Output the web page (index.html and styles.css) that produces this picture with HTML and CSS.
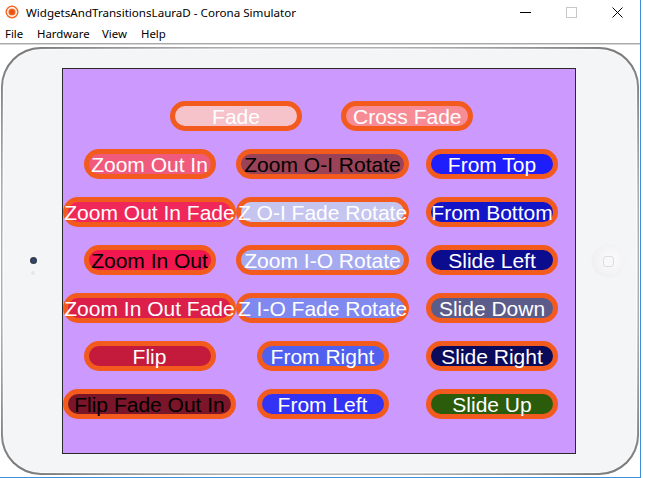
FILE: index.html
```html
<!DOCTYPE html>
<html>
<head>
<meta charset="utf-8">
<link rel="stylesheet" href="styles.css">
</head>
<body>
<div class="window">
  <div class="titlebar">
    <svg class="appicon" width="14" height="14" viewBox="0 0 14 14">
      <circle cx="7" cy="7" r="6.5" fill="#f26a21"/>
      <circle cx="7" cy="7" r="4.3" fill="none" stroke="#fff" stroke-width="1.4"/>
      <circle cx="7" cy="7" r="2.2" fill="#e8501a"/>
    </svg>
    <span class="title">WidgetsAndTransitionsLauraD - Corona Simulator</span>
    <div class="controls">
      <span class="ctl"><svg width="11" height="11" viewBox="0 0 11 11"><line x1="0" y1="5.5" x2="11" y2="5.5" stroke="#000" stroke-width="1"/></svg></span>
      <span class="ctl"><svg width="11" height="11" viewBox="0 0 11 11"><rect x="0.5" y="0.5" width="10" height="10" fill="none" stroke="#c8c8c8" stroke-width="1"/></svg></span>
      <span class="ctl"><svg width="11" height="11" viewBox="0 0 11 11"><path d="M0.5 0.5 L10.5 10.5 M10.5 0.5 L0.5 10.5" stroke="#000" stroke-width="1"/></svg></span>
    </div>
  </div>
  <div class="menubar">
    <span class="menu m-file">File</span>
    <span class="menu m-hw">Hardware</span>
    <span class="menu m-view">View</span>
    <span class="menu m-help">Help</span>
  </div>
  <div class="sep"></div>
  <div class="frame">
    <div class="bezel">
      <div class="side-left">
        <span class="camera"></span>
        <span class="sensor"></span>
      </div>
      <div class="screen">
        <div class="grid">
          <div class="btn c2 w1" style="background:#f5c3c9"><span>Fade</span></div>
          <div class="btn c4 w1" style="background:#f78c96"><span>Cross Fade</span></div>

          <div class="btn c1 w1" style="background:#f05a7d"><span>Zoom Out In</span></div>
          <div class="btn c3 w2 dark" style="background:#9a4257"><span>Zoom O-I Rotate</span></div>
          <div class="btn c5 w1" style="background:#1e1efc"><span>From Top</span></div>

          <div class="btn c1 w2" style="background:#f0285a"><span>Zoom Out In Fade</span></div>
          <div class="btn c3 w2" style="background:#c5c5ef"><span>Z O-I Fade Rotate</span></div>
          <div class="btn c5 w1" style="background:#1414c8"><span>From Bottom</span></div>

          <div class="btn c1 w1 dark" style="background:#f2174e"><span>Zoom In Out</span></div>
          <div class="btn c3 w2" style="background:#a5aaf0"><span>Zoom I-O Rotate</span></div>
          <div class="btn c5 w1" style="background:#0c0c8e"><span>Slide Left</span></div>

          <div class="btn c1 w2" style="background:#dc1e4b"><span>Zoom In Out Fade</span></div>
          <div class="btn c3 w2" style="background:#7f89f0"><span>Z I-O Fade Rotate</span></div>
          <div class="btn c5 w1" style="background:#5c5c8a"><span>Slide Down</span></div>

          <div class="btn c1 w1" style="background:#c41a3b"><span>Flip</span></div>
          <div class="btn c3 w1" style="background:#5061f0"><span>From Right</span></div>
          <div class="btn c5 w1" style="background:#0b0b5c"><span>Slide Right</span></div>

          <div class="btn c1 w2 dark" style="background:#7b1529"><span>Flip Fade Out In</span></div>
          <div class="btn c3 w1" style="background:#3333f5"><span>From Left</span></div>
          <div class="btn c5 w1" style="background:#2b5c0b"><span>Slide Up</span></div>
        </div>
      </div>
      <div class="side-right">
        <span class="home"><span class="home-sq"></span></span>
      </div>
    </div>
  </div>
</div>
</body>
</html>
```
FILE: styles.css
```css
html, body {
  margin: 0;
  padding: 0;
  background: #ffffff;
}

.window {
  width: 640px;
  height: 477px;
  border-right: 1px solid #3f8fdc;
  border-bottom: 1px solid #3f8fdc;
  background: #ffffff;
  font-family: "Noto Sans", "DejaVu Sans", sans-serif;
  font-size: 12px;
  color: #000;
  display: flex;
  flex-direction: column;
}

.titlebar {
  height: 24px;
  display: flex;
  align-items: center;
  padding-left: 5px;
}

.appicon {
  flex: none;
  margin-right: 7px;
}

.title {
  font-size: 11.6px;
}

.controls {
  margin-left: auto;
  display: flex;
  height: 24px;
}

.ctl {
  width: 46px;
  display: flex;
  align-items: center;
  justify-content: center;
}

.menubar {
  height: 19px;
  display: flex;
  align-items: center;
  padding-left: 5px;
}

.menu {
  font-size: 11.4px;
  flex: none;
}

.m-file { width: 32px; }
.m-hw { width: 65px; }
.m-view { width: 39px; }

.sep {
  height: 1px;
  background: #a9a9a9;
  border-bottom: 1px solid #d8d8d8;
}

.frame {
  margin-top: 2px;
  margin-left: 1px;
  width: 638px;
  height: 428px;
  box-sizing: border-box;
  padding: 3px;
  border-radius: 40px;
  background: radial-gradient(ellipse farthest-corner at 50% 50%, #f4f4f4 0%, #e8e8e8 62%, #d2d2d2 73%, #a8a8a8 85%, #6e6e6e 100%);
  box-shadow: inset 0 0 0 1px rgba(110, 110, 110, 0.35);
}

.bezel {
  width: 100%;
  height: 100%;
  border-radius: 37px;
  background: #f4f5f7;
  display: flex;
  align-items: center;
  box-shadow: 0 0 0 1px #fbfbfb;
}

.side-left {
  width: 58px;
  display: flex;
  flex-direction: column;
  align-items: center;
  padding-top: 9px;
  gap: 7px;
}

.camera {
  width: 7px;
  height: 7px;
  border-radius: 50%;
  background: radial-gradient(circle at 50% 50%, #2f4f8a 0%, #303848 55%, #4a4d55 100%);
}

.sensor {
  width: 4px;
  height: 4px;
  border-radius: 50%;
  background: #e6e7ea;
}

.screen {
  width: 512px;
  height: 384px;
  border: 1px solid #2a2a2a;
  background: #cc99ff;
  flex: none;
  overflow: hidden;
}

.grid {
  display: grid;
  grid-template-columns: repeat(6, 1fr);
  grid-auto-rows: 30px;
  row-gap: 18px;
  padding-top: 32px;
}

.btn {
  box-sizing: border-box;
  height: 30px;
  border: 5px solid #f25a1e;
  border-radius: 15px;
  display: flex;
  align-items: center;
  justify-content: center;
  justify-self: center;
  white-space: nowrap;
  font-family: "Liberation Sans", Arial, sans-serif;
  font-size: 21px;
  color: #ffffff;
  line-height: 1;
}

.btn span {
  flex: none;
}

.btn.dark {
  color: #000000;
}

.w1 { width: 132px; }
.w2 { width: 173px; }

.c1 { grid-column: 1 / 3; }
.c2 { grid-column: 2 / 4; }
.c3 { grid-column: 3 / 5; }
.c4 { grid-column: 4 / 6; }
.c5 { grid-column: 5 / 7; }

.side-right {
  flex: 1;
  display: flex;
  justify-content: center;
  padding-left: 4px;
}

.home {
  width: 32px;
  height: 32px;
  border-radius: 50%;
  background: radial-gradient(circle at 60% 45%, #fbfbfc 0%, #f3f3f5 55%, #e9eaed 100%);
  box-shadow: 0 0 1px #e2e3e6;
  display: flex;
  align-items: center;
  justify-content: center;
}

.home-sq {
  width: 9px;
  height: 9px;
  border: 1px solid #dcdde0;
  border-radius: 3px;
  background: #f8f8f9;
}
```
